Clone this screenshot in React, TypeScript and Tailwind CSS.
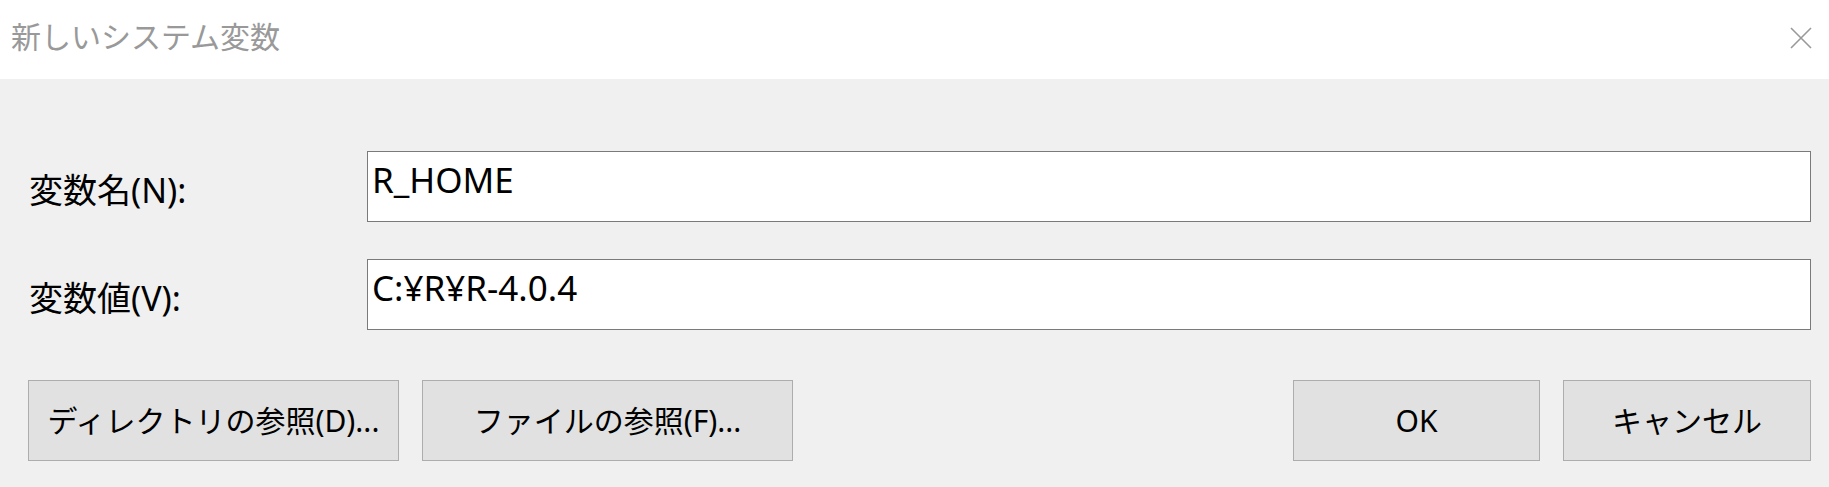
export default function App() {
  const font = { fontFamily: '"Noto Sans", "Noto Sans CJK JP", sans-serif' };
  return (
    <div className="w-[1829px] h-[487px] bg-[#f0f0f0] flex flex-col overflow-hidden" style={font}>
      <div className="h-[79px] bg-white flex items-center justify-between pl-[11px] pr-[17px]">
        <span className="text-[30px] leading-none text-[#999999] pb-[6px]">新しいシステム変数</span>
        <svg width="22" height="22" viewBox="0 0 22 22" className="mb-[4px]">
          <path d="M1 1 L21 21 M21 1 L1 21" stroke="#999999" strokeWidth="1.6" fill="none" />
        </svg>
      </div>
      <div className="flex-1 flex flex-col pt-[72px] pl-[29px] pr-[18px]">
        <div className="flex items-center">
          <div className="w-[338px] text-[34px] leading-none text-black pt-[6px]">変数名(N):</div>
          <div className="flex-1 h-[71px] bg-white border border-[#7a7a7a] pl-[4px] pt-[10px] text-[35px] leading-none text-black">
            R_HOME
          </div>
        </div>
        <div className="flex items-center mt-[37px]">
          <div className="w-[338px] text-[34px] leading-none text-black pt-[6px]">変数値(V):</div>
          <div className="flex-1 h-[71px] bg-white border border-[#7a7a7a] pl-[4px] pt-[10px] text-[35px] leading-none text-black">
            C:¥R¥R-4.0.4
          </div>
        </div>
        <div className="flex items-center justify-between mt-[50px] -ml-[1px]">
          <div className="flex gap-[23px]">
            <button className="w-[371px] h-[81px] bg-[#e1e1e1] border border-[#adadad] text-[30px] leading-none text-black">
              ディレクトリの参照(D)...
            </button>
            <button className="w-[371px] h-[81px] bg-[#e1e1e1] border border-[#adadad] text-[30px] leading-none text-black">
              ファイルの参照(F)...
            </button>
          </div>
          <div className="flex gap-[23px]">
            <button className="w-[247px] h-[81px] bg-[#e1e1e1] border border-[#adadad] text-[30px] leading-none text-black">
              OK
            </button>
            <button className="w-[248px] h-[81px] bg-[#e1e1e1] border border-[#adadad] text-[30px] leading-none text-black">
              キャンセル
            </button>
          </div>
        </div>
      </div>
    </div>
  );
}
